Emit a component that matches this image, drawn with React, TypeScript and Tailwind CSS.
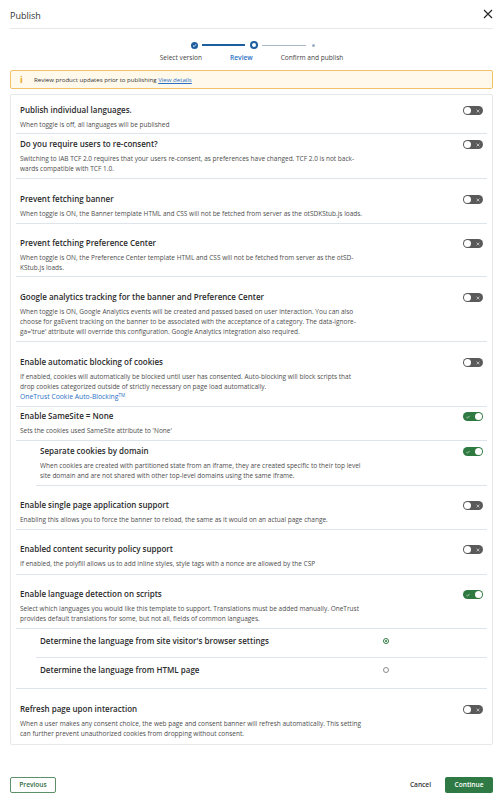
import React from "react";

function Toggle({ on }: { on?: boolean }) {
  if (on) {
    return (
      <div className="w-[20px] h-[9px] rounded-full bg-[#2f7a41] flex items-center justify-between pl-[3px] pr-[1px] shrink-0">
        <svg width="4" height="4" viewBox="0 0 4 4">
          <path d="M0.4 2.1 L1.5 3.1 L3.6 0.9" stroke="#dfeee2" strokeWidth="0.7" fill="none" />
        </svg>
        <div className="w-[7px] h-[7px] rounded-full bg-white" />
      </div>
    );
  }
  return (
    <div className="w-[20px] h-[9px] rounded-full bg-[#5a5a5a] flex items-center justify-between pl-[1px] pr-[3px] shrink-0">
      <div className="w-[7px] h-[7px] rounded-full bg-white" />
      <svg width="4" height="4" viewBox="0 0 4 4">
        <path d="M0.6 0.6 L3.4 3.4 M3.4 0.6 L0.6 3.4" stroke="#cfcfcf" strokeWidth="0.8" fill="none" />
      </svg>
    </div>
  );
}

type RowProps = {
  title: string;
  desc?: React.ReactNode;
  on?: boolean;
  pt: string;
  pb: string;
  border?: string;
  descW?: string;
};

function Row({ title, desc, on, pt, pb, border = "border-b border-[#dde4ec]", descW = "w-[345px]" }: RowProps) {
  return (
    <div className={`flex justify-between pl-[4px] pr-[4px] ${pt} ${pb} ${border}`}>
      <div>
        <div className="text-[8px] leading-[10px] font-semibold text-[#2b2b2b]">{title}</div>
        {desc && <div className={`mt-[5px] text-[6.5px] leading-[10px] text-[#4d4d4d] ${descW}`}>{desc}</div>}
      </div>
      <div className="pt-[1px]">
        <Toggle on={on} />
      </div>
    </div>
  );
}

export default function App() {
  return (
    <div className="w-[503px] h-[800px] bg-white relative" style={{ fontFamily: '"Open Sans", "Noto Sans", sans-serif' }}>
      {/* Header */}
      <div className="mx-[10px] h-[29px] flex items-center justify-between border-b border-[#e6e8eb]">
        <div className="text-[9px] text-[#333] pt-[3px]">Publish</div>
        <svg width="10" height="10" viewBox="0 0 10 10">
          <path d="M1 1 L9 9 M9 1 L1 9" stroke="#222" strokeWidth="1.1" fill="none" />
        </svg>
      </div>

      {/* Stepper */}
      <div className="flex items-center justify-center h-[8px] mt-[12px] pl-[2px]">
        <div className="w-[7px] h-[7px] rounded-full bg-[#1c5e9e] flex items-center justify-center">
          <svg width="5" height="5" viewBox="0 0 5 5">
            <path d="M1 2.6 L2.1 3.6 L4 1.4" stroke="white" strokeWidth="0.9" fill="none" />
          </svg>
        </div>
        <div className="w-[43px] h-[1.5px] bg-[#1c5e9e] ml-[4px] mr-[5px]" />
        <div className="w-[8px] h-[8px] rounded-full border-[2px] border-[#1c5e9e] bg-white" />
        <div className="w-[44px] h-[1px] bg-[#a9b7c7] ml-[4px] mr-[6px]" />
        <div className="w-[3px] h-[3px] rounded-full bg-[#9fb0c4]" />
      </div>
      <div className="flex justify-center gap-[28px] mt-[5px] text-[6.6px] leading-[8px] text-[#444]">
        <span>Select version</span>
        <span className="text-[#2a70c4] font-semibold">Review</span>
        <span>Confirm and publish</span>
      </div>

      {/* Alert */}
      <div className="mx-[10px] mt-[8px] h-[19px] border border-[#f3c16a] bg-[#fff9ec] rounded-[2px] flex items-center">
        <span className="ml-[9px] w-[6px] text-[9px] font-bold text-[#f0a020] leading-[9px]">i</span>
        <span className="ml-[8px] text-[6.1px] text-[#333]">
          Review product updates prior to publishing{" "}
          <span className="text-[#2a70c4] underline">View details</span>
        </span>
      </div>

      {/* Card */}
      <div className="mx-[10px] mt-[5px] border border-[#e8e8e8] rounded-[2px] px-[5px]">
        <Row
          title="Publish individual languages."
          desc="When toggle is off, all languages will be published"
          pt="pt-[10px]"
          pb="pb-[3px]"
        />
        <Row
          title="Do you require users to re-consent?"
          desc={"Switching to IAB TCF 2.0 requires that your users re-consent, as preferences have changed. TCF 2.0 is not back\u00ADwards compatible with TCF 1.0."}
          pt="pt-[5px]"
          pb="pb-[4px]"
        />
        <Row
          title="Prevent fetching banner"
          desc="When toggle is ON, the Banner template HTML and CSS will not be fetched from server as the otSDKStub.js loads."
          pt="pt-[15px]"
          pb="pb-[4px]"
        />
        <Row
          title="Prevent fetching Preference Center"
          desc={"When toggle is ON, the Preference Center template HTML and CSS will not be fetched from server as the otSD\u00ADKStub.js loads."}
          pt="pt-[14px]"
          pb="pb-[3px]"
        />
        <Row
          title="Google analytics tracking for the banner and Preference Center"
          desc="When toggle is ON, Google Analytics events will be created and passed based on user interaction. You can also choose for gaEvent tracking on the banner to be associated with the acceptance of a category. The data-ignore-ga='true' attribute will override this configuration. Google Analytics integration also required."
          pt="pt-[15px]"
          pb="pb-[4px]"
        />
        <Row
          title="Enable automatic blocking of cookies"
          desc={
            <>
              If enabled, cookies will automatically be blocked until user has consented. Auto-blocking will block scripts that drop cookies categorized outside of strictly necessary on page load automatically.
              <br />
              <span className="text-[#2a70c4] text-[6.8px]">
                OneTrust Cookie Auto-Blocking<sup className="text-[4.5px]">TM</sup>
              </span>
            </>
          }
          pt="pt-[15px]"
          pb="pb-[4px]"
        />
        <Row
          title="Enable SameSite = None"
          desc="Sets the cookies used SameSite attribute to 'None'"
          on
          pt="pt-[4px]"
          pb="pb-[4px]"
        />
        <div className="pl-[20px]">
          <Row
            title="Separate cookies by domain"
            desc="When cookies are created with partitioned state from an iframe, they are created specific to their top level site domain and are not shared with other top-level domains using the same iframe."
            on
            pt="pt-[5px]"
            pb="pb-[4px]"
            descW="w-[328px]"
          />
        </div>
        <Row
          title="Enable single page application support"
          desc="Enabling this allows you to force the banner to reload, the same as it would on an actual page change."
          pt="pt-[14px]"
          pb="pb-[4px]"
        />
        <Row
          title="Enabled content security policy support"
          desc="If enabled, the polyfill allows us to add inline styles, style tags with a nonce are allowed by the CSP"
          pt="pt-[14px]"
          pb="pb-[5px]"
        />
        <Row
          title="Enable language detection on scripts"
          desc="Select which languages you would like this template to support. Translations must be added manually. OneTrust provides default translations for some, but not all, fields of common languages."
          on
          pt="pt-[14px]"
          pb="pb-[4px]"
        />
        <div className="pl-[20px] border-b border-[#dde4ec]">
          <div className="flex items-center pl-[4px] pt-[7px] pb-[11px] border-b border-[#dde4ec]">
            <div className="w-[343px] text-[8px] leading-[10px] font-semibold text-[#2b2b2b]">
              Determine the language from site visitor's browser settings
            </div>
            <div className="w-[6px] h-[6px] rounded-full border border-[#2f7a41] flex items-center justify-center">
              <div className="w-[2.5px] h-[2.5px] rounded-full bg-[#2f7a41]" />
            </div>
          </div>
          <div className="flex items-center pl-[4px] pt-[7px] pb-[13px]">
            <div className="w-[343px] text-[8px] leading-[10px] font-semibold text-[#2b2b2b]">
              Determine the language from HTML page
            </div>
            <div className="w-[6px] h-[6px] rounded-full border border-[#8a8a8a] bg-white" />
          </div>
        </div>
        <Row
          title="Refresh page upon interaction"
          desc="When a user makes any consent choice, the web page and consent banner will refresh automatically. This setting can further prevent unauthorized cookies from dropping without consent."
          pt="pt-[15px]"
          pb="pb-[5px]"
          border=""
        />
      </div>

      {/* Footer */}
      <div className="mx-[10px] mt-[32px] flex items-center justify-between">
        <button className="w-[46px] h-[16px] border border-[#5d8f69] rounded-[2px] text-[6.6px] font-semibold text-[#2f6a3e] bg-white">
          Previous
        </button>
        <div className="flex items-center">
          <span className="text-[6.6px] font-semibold text-[#333] mr-[14px]">Cancel</span>
          <button className="w-[48px] h-[16px] rounded-[2px] bg-[#2f7a44] text-[6.6px] font-semibold text-white">
            Continue
          </button>
        </div>
      </div>
    </div>
  );
}
